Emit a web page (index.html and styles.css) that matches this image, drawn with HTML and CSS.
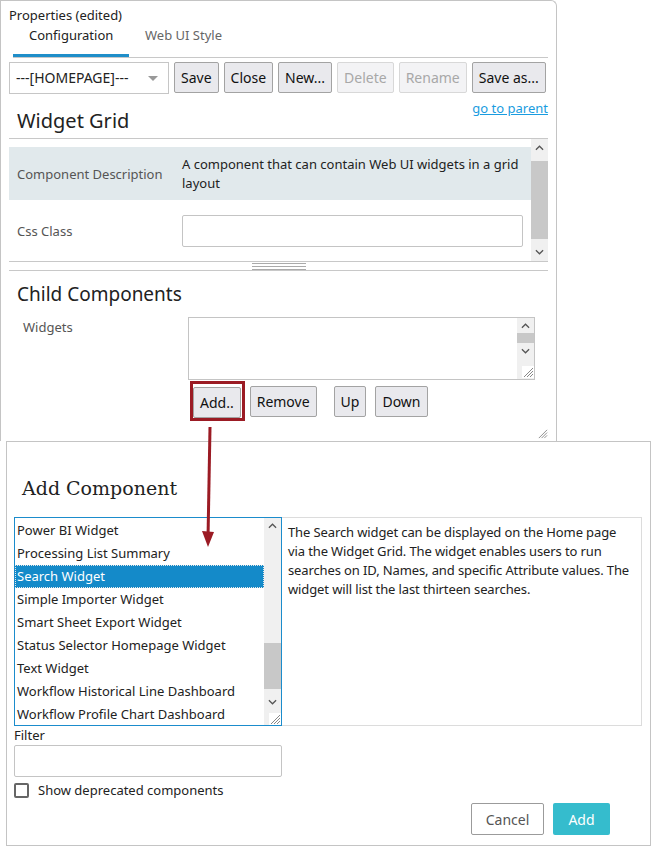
FILE: index.html
```html
<!DOCTYPE html>
<html>
<head>
<meta charset="UTF-8">
<link rel="stylesheet" href="styles.css">
<title>Properties</title>
</head>
<body>

<div class="props">
  <div class="props-title">Properties (edited)</div>
  <div class="tabs">
    <span class="tab active">Configuration</span>
    <span class="tab">Web UI Style</span>
  </div>

  <div class="toolbar">
    <div class="select">---[HOMEPAGE]---<span class="caret"></span></div>
    <button class="btn">Save</button>
    <button class="btn">Close</button>
    <button class="btn">New...</button>
    <button class="btn" disabled>Delete</button>
    <button class="btn" disabled>Rename</button>
    <button class="btn">Save as...</button>
  </div>

  <div class="heading-row">
    <h2 class="section">Widget Grid</h2>
    <a class="parent-link" href="#">go to parent</a>
  </div>

  <div class="scroll-area">
    <div class="scroll-content">
      <div class="row shaded">
        <div class="label">Component Description</div>
        <div class="value">A component that can contain Web UI widgets in a grid layout</div>
      </div>
      <div class="row">
        <div class="label">Css Class</div>
        <div class="value"><div class="input wide"></div></div>
      </div>
    </div>
    <div class="vscroll">
      <svg class="arrow" viewBox="0 0 10 6"><path d="M1 5 L5 1 L9 5" fill="none" stroke="#555" stroke-width="1.4"/></svg>
      <div class="thumb"></div>
      <svg class="arrow" viewBox="0 0 10 6"><path d="M1 1 L5 5 L9 1" fill="none" stroke="#555" stroke-width="1.4"/></svg>
    </div>
  </div>
  <div class="splitter"><span class="grip"></span></div>

  <h2 class="section child">Child Components</h2>
  <div class="widgets">
    <div class="label">Widgets</div>
    <div class="widgets-box">
      <div class="textarea">
        <div class="mini-scroll">
          <svg class="arrow" viewBox="0 0 10 6"><path d="M1 5 L5 1 L9 5" fill="none" stroke="#555" stroke-width="1.4"/></svg>
          <div class="thumb"></div>
          <svg class="arrow" viewBox="0 0 10 6"><path d="M1 1 L5 5 L9 1" fill="none" stroke="#555" stroke-width="1.4"/></svg>
          <svg class="resize" viewBox="0 0 12 12"><path d="M11 2 L2 11 M11 5 L5 11 M11 8 L8 11" stroke="#888" stroke-width="1"/></svg>
        </div>
      </div>
      <div class="child-buttons">
        <span class="highlight"><button class="btn">Add..</button></span>
        <button class="btn">Remove</button>
        <button class="btn spaced">Up</button>
        <button class="btn">Down</button>
      </div>
    </div>
  </div>
  <svg class="panel-resize" viewBox="0 0 12 12"><path d="M11 2 L2 11 M11 5 L5 11 M11 8 L8 11" stroke="#888" stroke-width="1"/></svg>
</div>

<div class="dialog">
  <h1 class="dialog-title">Add Component</h1>
  <div class="picker">
    <div class="list">
      <ul class="items">
        <li>Power BI Widget</li>
        <li>Processing List Summary</li>
        <li class="selected">Search Widget</li>
        <li>Simple Importer Widget</li>
        <li>Smart Sheet Export Widget</li>
        <li>Status Selector Homepage Widget</li>
        <li>Text Widget</li>
        <li>Workflow Historical Line Dashboard</li>
        <li>Workflow Profile Chart Dashboard</li>
      </ul>
      <div class="list-scroll">
        <svg class="arrow" viewBox="0 0 10 6"><path d="M1 5 L5 1 L9 5" fill="none" stroke="#555" stroke-width="1.4"/></svg>
        <div class="track"><div class="thumb"></div></div>
        <svg class="arrow" viewBox="0 0 10 6"><path d="M1 1 L5 5 L9 1" fill="none" stroke="#555" stroke-width="1.4"/></svg>
        <svg class="resize" viewBox="0 0 12 12"><path d="M11 2 L2 11 M11 5 L5 11 M11 8 L8 11" stroke="#888" stroke-width="1"/></svg>
      </div>
    </div>
    <div class="description">The Search widget can be displayed on the Home page via the Widget Grid. The widget enables users to run searches on ID, Names, and specific Attribute values. The widget will list the last thirteen searches.</div>
  </div>
  <div class="filter-label">Filter</div>
  <div class="input filter"></div>
  <label class="check"><span class="box"></span>Show deprecated components</label>
  <div class="dialog-buttons">
    <button class="btn-cancel">Cancel</button>
    <button class="btn-add">Add</button>
  </div>
</div>

<svg class="callout" width="20" height="130" viewBox="0 0 20 130">
  <path d="M10 0 L8 112" stroke="#9b1b24" stroke-width="3" fill="none"/>
  <path d="M2 104 L8 120 L14 105 Z" fill="#9b1b24"/>
</svg>

</body>
</html>
```

FILE: styles.css
```css
body { margin: 0; background: #FFFFFF; color: #222222;
       font-family: "Noto Sans", "Open Sans", sans-serif; font-size: 13px;
       position: relative; }

button { font-family: inherit; font-size: 14px; }

/* properties panel */
.props { width: 557px; height: 441px; box-sizing: border-box;
         border: 1px solid #c4c4c4; border-bottom: none;
         border-radius: 0 6px 0 0; padding: 5px 8px 0 8px;
         position: relative; }
.props-title { height: 19px; line-height: 19px; color: #222; }

.tabs { display: flex; margin-left: 4px; border-bottom: 1px solid #c8c8c8;
        height: 32px; }
.tab { padding: 0 16px; line-height: 20px; color: #666; }
.tab.active { color: #222; border-bottom: 3px solid #1f8ec9; width: 84px; }

.toolbar { display: flex; gap: 5px; margin-top: 4px; height: 32px; }
.select { width: 160px; box-sizing: border-box; border: 1px solid #c6c6c6;
          padding: 0 6px; line-height: 30px; position: relative; font-size: 14px; }
.caret { position: absolute; right: 10px; top: 13px; width: 0; height: 0;
         border-left: 5px solid transparent; border-right: 5px solid transparent;
         border-top: 5px solid #999; }

.btn { background: #e9e9ed; border: 1px solid #a3a3a3; border-radius: 2px;
       padding: 0 6px; height: 31px; color: #111; }
.btn[disabled] { background: #f3f3f5; border-color: #d8d8d8; color: #a8a8a8; }

.heading-row { display: flex; justify-content: space-between; height: 44px;
               border-bottom: 1px solid #c8c8c8; }
.parent-link { color: #1a9ce0; line-height: 16px; margin-top: 6px; align-self: flex-start; }

.section { font-weight: normal; font-size: 20px; margin: 0; padding-left: 8px;
           line-height: 26px; }
.heading-row .section { align-self: flex-end; padding-bottom: 4px; }

.scroll-area { display: flex; height: 122px; border-bottom: 1px solid #c8c8c8; }
.scroll-content { flex: 1; padding-top: 8px; }
.row { display: flex; align-items: center; }
.row.shaded { background: #e1e9ec; height: 53px; }
.row + .row { height: 61px; }
.label { width: 165px; padding-left: 8px; color: #555; flex-shrink: 0; }
.value { flex: 1; line-height: 19px; padding-right: 8px; }
.input { border: 1px solid #c4c4c4; border-radius: 2px; height: 29px; box-sizing: border-box; }
.input.wide { height: 32px; }

.vscroll { width: 17px; background: #f0f0f0; display: flex; flex-direction: column;
           align-items: center; }
.vscroll .thumb { flex: 1; width: 17px; background: #c8c8c8; margin: 4px 0; }
.arrow { width: 9px; height: 6px; margin: 6px 0; flex-shrink: 0; }

.splitter { height: 8px; border-bottom: 1px solid #c8c8c8; display: flex;
            justify-content: center; align-items: center; }
.grip { width: 54px; height: 5px; border-top: 1px solid #aaa;
        border-bottom: 1px solid #aaa; position: relative; }
.grip::after { content: ""; position: absolute; left: 0; right: 0; top: 2px;
               border-top: 1px solid #aaa; }

.section.child { height: 46px; line-height: 46px; font-size: 19px; }

.widgets { display: flex; }
.widgets .label { width: 165px; padding-left: 14px; align-self: flex-start;
                  line-height: 20px; }
.widgets-box { width: 347px; }
.textarea { height: 63px; border: 1px solid #c4c4c4; box-sizing: border-box;
            display: flex; justify-content: flex-end; }
.mini-scroll { width: 17px; background: #f0f0f0; display: flex; flex-direction: column;
               align-items: center; }
.mini-scroll .arrow { margin: 5px 0 4px; }
.mini-scroll .thumb { height: 10px; width: 17px; background: #c8c8c8; }
.mini-scroll .resize { width: 12px; height: 12px; margin-top: 8px; background: #fff;
                       align-self: flex-end; }

.child-buttons { display: flex; align-items: center; gap: 9px; height: 42px; margin-left: 2px; }
.highlight { border: 3px solid #9b1b24; padding: 3px 1px 0 0; display: flex; margin-right: -4px; }
.child-buttons .btn { height: 31px; }
.btn.spaced { margin-left: 8px; }

.panel-resize { position: absolute; right: 8px; bottom: 2px; width: 11px; height: 11px; }

/* add component dialog */
.dialog { margin-left: 6px; width: 645px; height: 405px; box-sizing: border-box;
          border: 1px solid #c4c4c4; padding: 0 8px 0 7px; }
.dialog-title { font-family: "DejaVu Serif", serif; font-weight: normal; font-size: 19px;
                margin: 0; padding: 34px 0 0 8px; height: 41px; line-height: 24px; color: #222; }

.picker { display: flex; height: 209px; }
.list { width: 268px; box-sizing: border-box; border: 1px solid #1b8ccc; display: flex; }
.items { list-style: none; margin: 0; padding: 1px 0 0 0; flex: 1; }
.items li { height: 23px; line-height: 23px; padding-left: 2px; color: #222; }
.items li.selected { background: #148ac9; color: #fff; outline: 1px dotted #e8e8e8;
                     outline-offset: -1px; }
.list-scroll { width: 17px; background: #f0f0f0; display: flex; flex-direction: column;
               align-items: center; }
.list-scroll .arrow { margin: 5px 0 4px; }
.track { flex: 1; width: 17px; position: relative; }
.track .thumb { position: absolute; left: 0; right: 0; top: 110px; height: 46px; background: #c8c8c8; }
.list-scroll .resize { width: 12px; height: 12px; margin-top: 4px; background: #fff;
                       align-self: flex-end; }
.description { width: 360px; box-sizing: border-box; border: 1px solid #dcdcdc;
               padding: 5px 5px 5px 6px; line-height: 19px; color: #222; border-left: none;
               letter-spacing: -0.12px; }

.filter-label { line-height: 18px; }
.input.filter { width: 268px; height: 32px; margin-top: 1px; }
.check { display: flex; align-items: center; margin-top: 5px; line-height: 16px; color: #222; }
.box { width: 11px; height: 11px; border: 2px solid #666; border-radius: 2px; margin-right: 9px; }

.dialog-buttons { display: flex; justify-content: flex-end; gap: 9px; margin-top: 5px;
                  padding-right: 32px; }
.btn-cancel { background: #fff; border: 1px solid #9b9b9b; border-radius: 2px;
              width: 73px; height: 32px; color: #555; }
.btn-add { background: #35bccd; border: none; border-radius: 2px; width: 57px; height: 32px;
           color: #fff; }

.callout { position: absolute; left: 200px; top: 427px; }
```
